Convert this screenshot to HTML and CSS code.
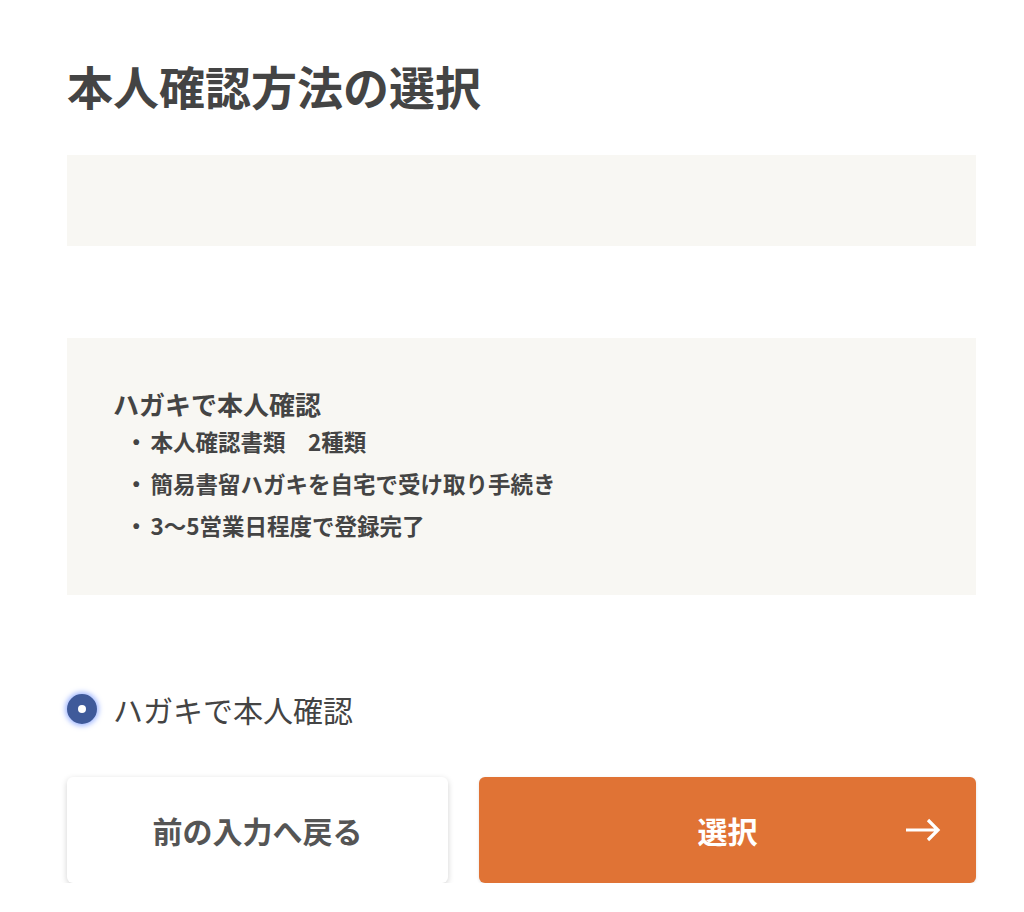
FILE: index.html
```html
<!DOCTYPE html>
<html lang="ja">

<head>
  <meta charset="UTF-8">
  <meta name="viewport" content="width=device-width, initial-scale=1.0">
  <title>本人確認方法の選択</title>
  <link rel="stylesheet" href="styles.css">
</head>

<body>
  <div class="main">
    <h1 class="title">本人確認方法の選択</h1>

    <div class="panel panel-empty"></div>

    <div class="panel panel-info">
      <h2 class="info-title">ハガキで本人確認</h2>
      <ul class="info-list">
        <li>本人確認書類　2種類</li>
        <li>簡易書留ハガキを自宅で受け取り手続き</li>
        <li>3〜5営業日程度で登録完了</li>
      </ul>
    </div>

    <label class="choice">
      <span class="radio"></span>
      <span class="choice-text">ハガキで本人確認</span>
    </label>

    <div class="actions">
      <button class="btn btn-back">前の入力へ戻る</button>
      <button class="btn btn-next">
        <span>選択</span>
        <svg class="arrow" width="36" height="24" viewBox="0 0 36 24">
          <path d="M1 12 H33 M23 2 L33 12 L23 22" fill="none" stroke="#fff" stroke-width="3.2" />
        </svg>
      </button>
    </div>
  </div>
</body>

</html>
```

FILE: styles.css
```css
* {
  padding: 0;
  margin: 0;
  box-sizing: border-box;
}

body {
  background: #fff;
  color: #444;
  font-family: "Noto Sans CJK JP", "Noto Sans", sans-serif;
}

.main {
  width: 909px;
  margin: 0 0 0 67px;
  padding-top: 57px;
}

.title {
  font-size: 46px;
  font-weight: 700;
  line-height: 56px;
  color: #444;
}

.panel {
  background: #f8f7f3;
}

.panel-empty {
  height: 91px;
  margin-top: 42px;
}

.panel-info {
  height: 257px;
  margin-top: 92px;
  padding: 50px 46px 0;
}

.info-title {
  font-size: 26px;
  font-weight: 700;
  line-height: 32px;
  color: #444;
}

.info-list {
  list-style: none;
  padding-left: 12px;
}

.info-list li {
  font-size: 22.5px;
  font-weight: 700;
  line-height: 42px;
  color: #444;
}

.info-list li::before {
  content: "・";
  margin-right: 3px;
}

.choice {
  display: flex;
  align-items: center;
  gap: 16px;
  margin-top: 94px;
}

.radio {
  width: 30px;
  height: 30px;
  border-radius: 50%;
  background: #3f5a9a;
  border: 11px solid #3f5a9a;
  box-shadow: 0 0 5px 2px rgba(90, 130, 255, 0.55);
  position: relative;
}

.radio::after {
  content: '';
  position: absolute;
  inset: 0;
  border-radius: 50%;
  background: #fff;
}

.choice-text {
  font-size: 30px;
  line-height: 40px;
  color: #444;
}

.actions {
  display: flex;
  gap: 31px;
  margin-top: 48px;
}

.btn {
  height: 106px;
  border: none;
  border-radius: 6px;
  font-family: inherit;
  font-size: 30px;
  font-weight: 700;
}

.btn-back {
  width: 381px;
  background: #fff;
  color: #555;
  box-shadow: 0 2px 6px rgba(0, 0, 0, 0.18);
}

.btn-next {
  flex: 1;
  background: #e07335;
  color: #fff;
  position: relative;
  box-shadow: 0 1px 3px rgba(0, 0, 0, 0.12);
}

.arrow {
  position: absolute;
  right: 35px;
  top: 41px;
}
```
